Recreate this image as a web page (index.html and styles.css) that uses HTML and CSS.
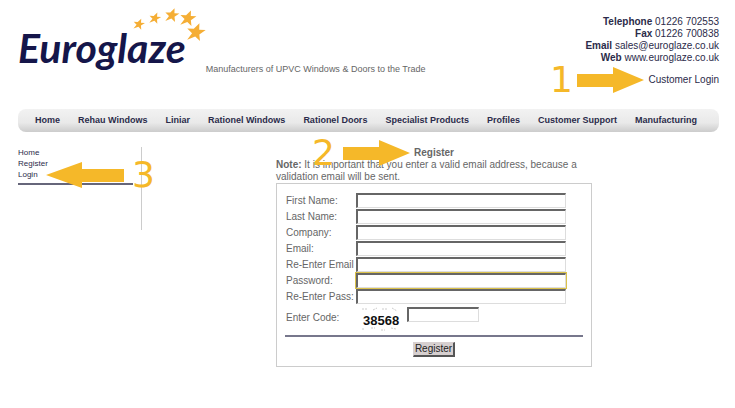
FILE: index.html
```html
<!DOCTYPE html>
<html lang="en">
<head>
  <meta charset="UTF-8" />
  <meta name="viewport" content="width=device-width, initial-scale=1" />
  <title>Euroglaze - Register</title>
  <link rel="stylesheet" href="styles.css">
</head>
<body>

<header class="header">
  <div class="logo">Euroglaze
    <svg class="stars" width="84" height="40" viewBox="0 0 84 40" fill="#f5ae35">
      <defs>
        <path id="star" d="M2-10 3-3 10-4 4 2 6 9 0 5-8 10-4 2-10-2-3-3Z" />
      </defs>
      <use href="#star" transform="translate(13 20) rotate(12) scale(.56)" />
      <use href="#star" transform="translate(29 14) rotate(12) scale(.58)" />
      <use href="#star" transform="translate(46 11) rotate(10) scale(.7)" />
      <use href="#star" transform="translate(62 14) rotate(10) scale(.8)" />
      <use href="#star" transform="translate(70 28) rotate(10) scale(.92)" />
    </svg>
  </div>
  <p class="tagline">Manufacturers of UPVC Windows &amp; Doors to the Trade</p>
  <div class="contact">
    <div><b>Telephone</b> 01226 702553</div>
    <div><b>Fax</b> 01226 700838</div>
    <div><b>Email</b> <a href="mailto:sales@euroglaze.co.uk">sales@euroglaze.co.uk</a></div>
    <div><b>Web</b> <a href="#">www.euroglaze.co.uk</a></div>
    <div class="customer-login">
      <span class="callout callout-before">1
        <svg width="67" height="26" viewBox="0 0 67 26"><path d="M0 7H36V0L67 13 36 26V20H0Z" /></svg>
      </span>
      <a href="#">Customer Login</a>
    </div>
  </div>
</header>

<nav class="nav">
  <a href="#">Home</a>
  <a href="#">Rehau Windows</a>
  <a href="#">Liniar</a>
  <a href="#">Rationel Windows</a>
  <a href="#">Rationel Doors</a>
  <a href="#">Specialist Products</a>
  <a href="#">Profiles</a>
  <a href="#">Customer Support</a>
  <a href="#">Manufacturing</a>
</nav>

<div class="page">
  <aside class="sidebar">
    <ul>
      <li><a href="#">Home</a></li>
      <li><a href="#">Register</a></li>
      <li>
        <a href="#">Login</a>
        <span class="callout callout-after">
          <svg width="78" height="26" viewBox="0 0 78 26"><path d="M78 7H36V0L0 13 36 26V20H78Z" /></svg>
          3
        </span>
      </li>
    </ul>
  </aside>

  <main class="content">
    <h1>
      <span class="title">Register
        <span class="callout callout-before">2
          <svg width="67" height="26" viewBox="0 0 67 26"><path d="M0 7H36V0L67 13 36 26V20H0Z" /></svg>
        </span>
      </span>
    </h1>
    <p class="note"><b>Note:</b> It is important that you enter a valid email address, because a validation email will be sent.</p>

    <form class="register">
      <div class="fields">
        <label for="first">First Name:</label>
        <input id="first" type="text">
        <label for="last">Last Name:</label>
        <input id="last" type="text">
        <label for="company">Company:</label>
        <input id="company" type="text">
        <label for="email">Email:</label>
        <input id="email" type="text">
        <label for="email2">Re-Enter Email</label>
        <input id="email2" type="text">
        <label for="pass">Password:</label>
        <input id="pass" class="current" type="password">
        <label for="pass2">Re-Enter Pass:</label>
        <input id="pass2" type="password">
        <label for="code">Enter Code:</label>
        <div class="code">
          <svg class="captcha" width="40" height="24" viewBox="0 0 40 24">
            <path d="M1 2h5M12 3l4-2M21 2h5M31 1l5 3M1 22h3M10 21h4M20 23h4M30 21l5 1" stroke="#ccc" stroke-dasharray="2 1" />
            <text x="2" y="18">38568</text>
          </svg>
          <input id="code" type="text">
        </div>
      </div>
      <div class="actions">
        <button type="submit">Register</button>
      </div>
    </form>
  </main>
</div>

</body>
</html>
```
FILE: styles.css
```css
* {
  box-sizing: border-box;
}

body {
  margin: 0;
  padding: 0 16px 0 18px;
  background: #fff;
  color: #666;
  font: 10px/12px "Liberation Sans", Arial, sans-serif;
}

a {
  color: #2b2b4a;
  text-decoration: none;
}

.header {
  display: flex;
  align-items: flex-start;
  padding-top: 16px;
}

.logo {
  position: relative;
  margin-top: 8px;
  color: #15164a;
  font: italic 700 41px/48px Lato, sans-serif;
}

.stars {
  position: absolute;
  left: 108px;
  top: -20px;
}

.tagline {
  margin: 47px 0 0 20px;
  font-size: 9px;
}

.contact {
  margin-left: auto;
  color: #2b2b4a;
  text-align: right;
}

.customer-login {
  position: relative;
  margin: 10px 0 23px;
}

/* numbered arrows pointing at the links */
.callout {
  position: absolute;
  top: 50%;
  display: flex;
  align-items: center;
  gap: 8px;
  color: #f5b829;
  font: 400 36px/36px "DejaVu Sans", sans-serif;
  transform: translateY(-50%);
}

.callout svg {
  flex: none;
  fill: #f5b829;
}

.callout-before {
  right: 100%;
  margin-right: 4px;
}

.customer-login .callout {
  right: 71px;
  gap: 4px;
}

.callout-after {
  left: 28px;
}

.nav {
  display: flex;
  gap: 18px;
  padding: 0 17px;
  border-radius: 8px;
  background: linear-gradient(#f2f2f2, #e9e9e9 60%, #ccc);
  font-size: 9px;
  font-weight: 700;
  line-height: 23px;
  white-space: nowrap;
}

.page {
  display: flex;
  align-items: flex-start;
  padding-top: 15px;
}

.sidebar {
  width: 124px;
  min-height: 83px;
  margin-right: 7px;
  padding-right: 8px;
  border-right: 1px solid #ccc;
  font-size: 8px;
  line-height: 11px;
}

.sidebar ul {
  margin: 0;
  padding: 0 0 3px;
  border-bottom: 2px solid #66667a;
  list-style: none;
}

.sidebar li {
  position: relative;
}

.content {
  flex: 1;
  max-width: 316px;
  margin: 0 auto;
}

h1 {
  margin: 0;
  font-size: 10px;
  line-height: 12px;
  text-align: center;
}

.title {
  position: relative;
}

.note {
  margin: 0;
}

.register {
  padding: 9px 8px;
  border: 1px solid #ccc;
}

.fields {
  display: grid;
  grid-template-columns: 70px 1fr;
  row-gap: 1px;
  align-items: center;
  padding: 0 17px 4px 1px;
}

input {
  width: 100%;
  height: 15px;
  padding: 0 2px;
  border: 1px solid #ddd;
  border-top: 2px solid #666;
  border-left: 2px solid #666;
  background: #fff;
  font: inherit;
}

input.current,
input:focus {
  position: relative;
  outline: 1px solid #dcc24a;
}

.code {
  display: flex;
  align-items: flex-start;
  gap: 6px;
  padding: 2px 0 0 5px;
}

.code input {
  width: 72px;
}

.captcha {
  flex: none;
}

.captcha text {
  fill: #111;
  font: 700 13px "Liberation Sans", Arial, sans-serif;
}

.actions {
  padding-top: 5px;
  border-top: 2px solid #77778c;
  text-align: center;
}

button {
  padding: 0 1px;
  border: 1px solid #d8d0d0;
  border-right: 2px solid #555;
  border-bottom: 2px solid #555;
  background: #d6cfcf;
  color: #222;
  font: inherit;
}
```
